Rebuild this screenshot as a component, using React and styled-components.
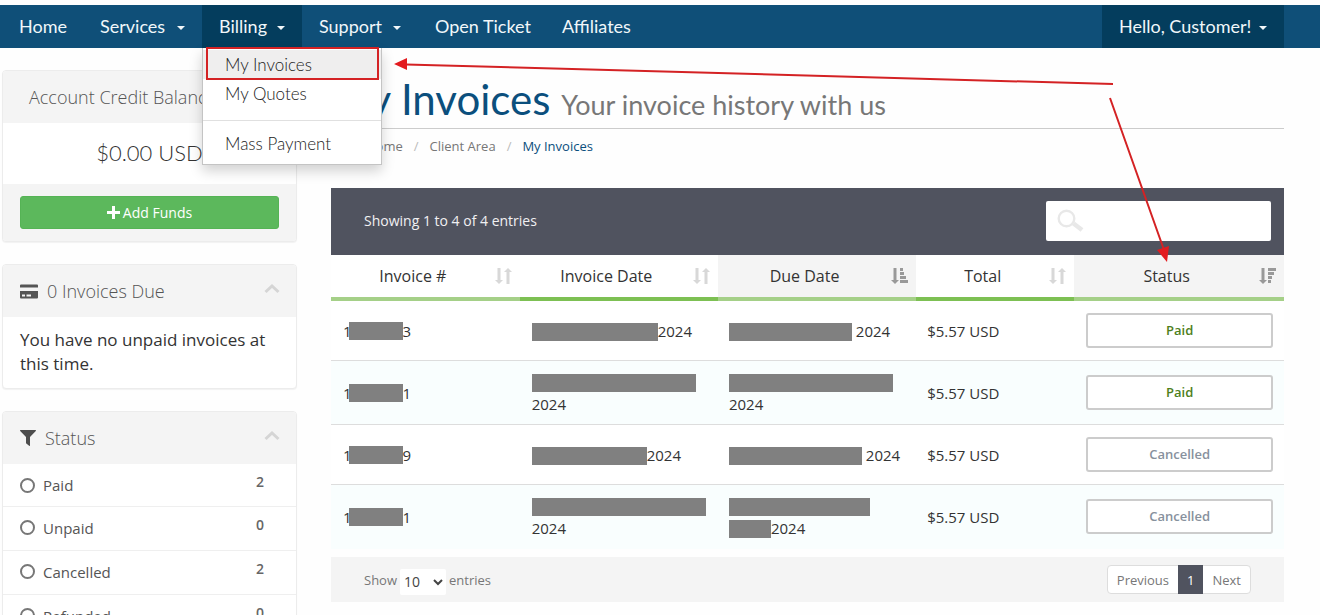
import React from "react";
import styled, { createGlobalStyle, css } from "styled-components";

const display = `Lato, "Open Sans", sans-serif`;

const GlobalStyle = createGlobalStyle`
  * { box-sizing: border-box; }
  body { margin: 0; background: #fefefe; color: #333; font: 400 15px/22px "Open Sans", sans-serif; }
  a { color: inherit; text-decoration: none; }
  button, input, select { font: inherit; color: inherit; }
  ul, ol, h1, h2, h3, p { margin: 0; padding: 0; list-style: none; }
`;

const Page = styled.div`
  position: relative;
  height: 100vh;
  overflow: hidden;
  padding-top: 5px;
`;

const NavBar = styled.nav`
  background: #0f4f78;
  padding: 0 36px 0 2px;
  display: flex;
  justify-content: space-between;
`;
const NavList = styled.ul`
  display: flex;
`;
const NavItem = styled.li`
  position: relative;
`;
const NavLink = styled.a`
  display: flex;
  align-items: center;
  justify-content: space-between;
  height: 43px;
  min-width: ${(p) => p.$width}px;
  padding: 0 ${(p) => (p.$caret ? 17 : 0)}px 2px 17px;
  font-family: ${display};
  font-size: 18px;
  color: #f1f7fa;
  white-space: nowrap;
  background: ${(p) => (p.$active ? "#043d5d" : "transparent")};
`;
const Caret = styled.span`
  border: 4px solid transparent;
  border-top-color: currentColor;
  border-bottom: 0;
  margin-top: 4px;
`;

const Menu = styled.ul`
  position: absolute;
  z-index: 5;
  top: 100%;
  left: 0;
  width: 180px;
  padding: 2px 0 6px;
  background: #fff;
  border: 1px solid #c4c4c4;
  border-top: 0;
  box-shadow: 0 6px 12px rgba(0, 0, 0, 0.18);
`;
const MenuLink = styled.a`
  display: block;
  padding: 0 22px;
  font: 300 17px/29px ${display};
  color: #222;
  background: ${(p) => (p.$active ? "#efeeee" : "transparent")};
`;
const Divider = styled.li`
  height: 1px;
  margin: 12px 0 8px;
  background: #e0e0e0;
`;

const Layout = styled.div`
  display: flex;
  align-items: flex-start;
  gap: 34px;
  padding: 22px 36px 0 2px;
`;
const Sidebar = styled.aside`
  flex: 0 0 295px;
  display: flex;
  flex-direction: column;
  gap: 22px;
`;
const Panel = styled.section`
  background: #fff;
  border: 1px solid #ececec;
  border-radius: 4px;
  box-shadow: 0 1px 1px rgba(0, 0, 0, 0.05);
  overflow: hidden;
`;
const PanelHead = styled.h3`
  display: flex;
  align-items: center;
  gap: 9px;
  height: 52px;
  padding: 0 16px 0 ${(p) => (p.$plain ? 26 : 17)}px;
  background: #f4f4f4;
  font-size: 18px;
  font-weight: 300;
  color: #555;
`;
const PanelTitle = styled.span`
  flex: 1;
`;
const Balance = styled.p`
  padding: 15px 0 16px;
  text-align: center;
  font: 300 22px/30px ${display};
  color: #333;
`;
const PanelFoot = styled.div`
  padding: 12px 17px;
  background: #f4f4f4;
`;
const GreenButton = styled.button`
  width: 100%;
  height: 33px;
  display: flex;
  align-items: center;
  justify-content: center;
  gap: 3px;
  border: 1px solid #55b355;
  border-radius: 3px;
  background: #5cb85c;
  color: #fff;
  font-size: 14px;
`;
const PanelText = styled.p`
  padding: 11px 17px 12px;
  font-size: 17px;
  line-height: 24px;
`;
const FilterRow = styled.label`
  display: flex;
  align-items: center;
  gap: 8px;
  height: ${(p) => (p.$first ? 42 : 44)}px;
  padding: 0 32px ${(p) => (p.$first ? 0 : 2)}px 17px;
  border-top: ${(p) => (p.$first ? 0 : 1)}px solid #efefef;
  color: #555;
`;
const Radio = styled.input`
  appearance: none;
  width: 15px;
  height: 15px;
  margin: 0;
  border: 2px solid #777;
  border-radius: 50%;
`;
const FilterName = styled.span`
  flex: 1;
`;
const Count = styled.span`
  align-self: flex-start;
  padding-top: 7px;
  font-size: 14px;
  font-weight: 600;
  color: #666;
`;

const Main = styled.main`
  flex: 1;
  min-width: 0;
`;
const Title = styled.h1`
  padding-top: 6px;
  height: 59px;
  border-bottom: 1px solid #ccc;
  font: 400 42px/46px ${display};
  color: #0b4f7d;
  white-space: nowrap;
`;
const Subtitle = styled.small`
  margin-left: 11px;
  font-size: 27px;
  color: #777;
`;
const Breadcrumb = styled.ol`
  display: flex;
  gap: 11px;
  padding: 7px 0 32px 35px;
  font-size: 13px;
  line-height: 20px;
  color: #777;
`;
const Slash = styled.li`
  color: #bbb;
`;
const Crumb = styled.li`
  color: ${(p) => (p.$current ? "#0b4f7d" : "inherit")};
`;

const Toolbar = styled.div`
  display: flex;
  align-items: center;
  justify-content: space-between;
  height: 67px;
  padding: 0 13px 2px 33px;
  background: #50535f;
  color: #f0f0f2;
  font-size: 14px;
`;
const SearchBox = styled.label`
  display: flex;
  align-items: center;
  gap: 8px;
  width: 225px;
  height: 40px;
  padding: 0 11px;
  border-radius: 2px;
  background: #fff;
`;
const SearchInput = styled.input`
  flex: 1;
  min-width: 0;
  border: 0;
  outline: 0;
  color: #333;
  background: transparent;
`;

const Table = styled.table`
  width: 100%;
  table-layout: fixed;
  border-collapse: separate;
  border-spacing: 0;
  margin-bottom: 8px;
`;
const Th = styled.th`
  width: ${(p) => p.$share}%;
  padding: 0;
  font-weight: 400;
  background: ${(p) => (p.$sorted ? "#f4f4f4" : "#fff")};
  border-bottom: 4px solid ${(p) => (p.$pale ? "#a5d088" : "#7dc053")};
`;
const SortButton = styled.button`
  display: flex;
  align-items: center;
  width: 100%;
  height: 42px;
  padding: 0 8px 0 0;
  border: 0;
  background: none;
  font-size: 16px;
  color: #333;
`;
const SortName = styled.span`
  flex: 1;
`;
const Tr = styled.tr`
  height: ${(p) => (p.$even ? 64 : 60)}px;
  background: ${(p) => (p.$even ? "#f9fefe" : "#fff")};
`;
const Td = styled.td`
  padding: 0 11px 0 ${(p) => (p.$tight ? 11 : 12)}px;
  border-bottom: 1px solid #ddd;
  white-space: nowrap;
  ${Tr}:last-child & {
    border-bottom-color: transparent;
  }
`;
const Redacted = styled.span`
  display: inline-block;
  vertical-align: middle;
  width: ${(p) => p.$width}px;
  height: 18px;
  background: #808080;
  ${(p) => p.$overlap && css`margin: -4px 0 0 -3px; vertical-align: -3px;`}
`;
const StatusBadge = styled.span`
  display: block;
  height: 35px;
  border: 2px solid #ccc;
  border-radius: 3px;
  background: #fff;
  text-align: center;
  font-size: 13px;
  font-weight: 600;
  line-height: 30px;
  color: ${(p) => (p.$paid ? "#4d801c" : "#87919d")};
`;

const TableFoot = styled.div`
  display: flex;
  align-items: center;
  justify-content: space-between;
  height: 45px;
  padding: 0 33px;
  background: #f4f4f4;
  font-size: 13px;
  color: #777;
`;
const LengthLabel = styled.label`
  display: flex;
  align-items: center;
  gap: 3px;
`;
const Select = styled.select`
  width: 46px;
  height: 26px;
  margin-top: 4px;
  border: 0;
  border-radius: 2px;
  background: #fff;
  font-size: 14px;
  color: #444;
`;
const Pager = styled.div`
  display: flex;
  height: 29px;
  border: 1px solid #ddd;
  border-radius: 4px;
  background: #fff;
`;
const PageButton = styled.button`
  margin: ${(p) => (p.$current ? "-1px 0" : 0)};
  padding: 0 9px;
  border: 0;
  background: ${(p) => (p.$current ? "#50535f" : "transparent")};
  color: ${(p) => (p.$current ? "#fff" : "inherit")};
`;

const Annotations = styled.svg`
  position: absolute;
  z-index: 10;
  top: 0;
  left: 0;
  pointer-events: none;
`;

const ChevronUp = () => (
  <svg width="16" height="16" viewBox="0 0 16 16" fill="none" stroke="#d5d5d5" strokeWidth="3">
    <path d="M1.500 9 8 3l6.500 6" />
  </svg>
);
const CardIcon = () => (
  <svg width="18" height="15" viewBox="0 0 18 15" fill="#555">
    <path d="M1 .5h16a1 1 0 0 1 1 1V3.500H0V1.500a1 1 0 0 1 1-1zM0 7h18v6.500a1 1 0 0 1-1 1H1a1 1 0 0 1-1-1zM2 10.500v2h3v-2zm4.500 0v2H11v-2z" fillRule="evenodd" />
  </svg>
);
const FilterIcon = () => (
  <svg width="16" height="16" viewBox="0 0 16 16" fill="#4d4d4d">
    <path d="M.6 0h14.800c.6 0 .8.6.4 1L10 7v8.400c0 .5-.5.700-.9.400L6.300 13.400A1 1 0 0 1 6 12.700V7L.2 1C-.2.600 0 0 .6 0z" />
  </svg>
);
const PlusIcon = () => (
  <svg width="13" height="13" viewBox="0 0 13 13" fill="#fff">
    <path d="M5 0h3v5h5v3H8v5H5V8H0V5h5z" />
  </svg>
);
const SearchIcon = () => (
  <svg width="28" height="24" viewBox="0 0 28 24" fill="none" stroke="#e8e8e8">
    <circle cx="9.500" cy="9.500" r="7.800" strokeWidth="2.400" />
    <path d="M16.500 14.500 25 21" strokeWidth="4.500" />
  </svg>
);
const SortIcon = ({ kind }) => (
  <svg width="17" height="18" viewBox="0 0 17 18" fill={kind === "none" ? "#d8d8d8" : "#999"}>
    <path d="M2.500 1h3v12H8l-4 4-4-4h2.500z" />
    {kind === "none" && <path d="M11.500 17h3V5H17l-4-4-4 4h2.500z" />}
    {kind === "asc" && <path d="M9 1h3v3H9zM9 5h4v3H9zM9 9h6v3H9zM9 13h8v3H9z" />}
    {kind === "desc" && <path d="M9 1h8v3H9zM9 5h6v3H9zM9 9h4v3H9zM9 13h3v3H9z" />}
  </svg>
);

const columns = [
  { name: "Invoice #", share: 19.8, kind: "none", pale: true },
  { name: "Invoice Date", share: 20.8, kind: "none" },
  { name: "Due Date", share: 20.8, kind: "asc", pale: true },
  { name: "Total", share: 16.6, kind: "none" },
  { name: "Status", share: 22, kind: "desc", pale: true },
];

const invoices = [
  { last: "3", issued: <><Redacted $width={126} />2024</>, due: <><Redacted $width={123} /> 2024</>, status: "Paid" },
  { last: "1", issued: <><Redacted $width={164} /><br />2024</>, due: <><Redacted $width={164} /><br />2024</>, status: "Paid" },
  { last: "9", issued: <><Redacted $width={115} />2024</>, due: <><Redacted $width={133} /> 2024</>, status: "Cancelled" },
  { last: "1", issued: <><Redacted $width={174} /><br />2024</>, due: <><Redacted $width={141} /><br /><Redacted $width={42} />2024</>, status: "Cancelled" },
];

const filters = [["Paid", 2], ["Unpaid", 0], ["Cancelled", 2], ["Refunded", 0]];

const NavEntry = ({ label, width, caret, active, children }) => (
  <NavItem>
    <NavLink href="#" $width={width} $caret={caret} $active={active}>
      {label}
      {caret && <Caret />}
    </NavLink>
    {children}
  </NavItem>
);

export default function App() {
  return (
    <Page>
      <GlobalStyle />
      <NavBar>
        <NavList>
          <NavEntry label="Home" width={81} />
          <NavEntry label="Services" width={119} caret />
          <NavEntry label="Billing" width={100} caret active>
            <Menu>
              <li><MenuLink href="#" $active>My Invoices</MenuLink></li>
              <li><MenuLink href="#">My Quotes</MenuLink></li>
              <Divider />
              <li><MenuLink href="#">Mass Payment</MenuLink></li>
            </Menu>
          </NavEntry>
          <NavEntry label="Support" width={116} caret />
          <NavEntry label="Open Ticket" width={127} />
          <NavEntry label="Affiliates" width={99} />
        </NavList>
        <NavList>
          <NavEntry label="Hello, Customer!" width={182} caret active />
        </NavList>
      </NavBar>

      <Layout>
        <Sidebar>
          <Panel>
            <PanelHead $plain>Account Credit Balance</PanelHead>
            <Balance>$0.00 USD</Balance>
            <PanelFoot>
              <GreenButton type="button"><PlusIcon />Add Funds</GreenButton>
            </PanelFoot>
          </Panel>
          <Panel>
            <PanelHead><CardIcon /><PanelTitle>0 Invoices Due</PanelTitle><ChevronUp /></PanelHead>
            <PanelText>You have no unpaid invoices at this time.</PanelText>
          </Panel>
          <Panel>
            <PanelHead><FilterIcon /><PanelTitle>Status</PanelTitle><ChevronUp /></PanelHead>
            {filters.map(([name, count], i) => (
              <FilterRow key={name} $first={i === 0}>
                <Radio type="radio" name="status" />
                <FilterName>{name}</FilterName>
                <Count>{count}</Count>
              </FilterRow>
            ))}
          </Panel>
        </Sidebar>

        <Main>
          <Title>My Invoices<Subtitle>Your invoice history with us</Subtitle></Title>
          <Breadcrumb>
            <Crumb><a href="#">Home</a></Crumb>
            <Slash>/</Slash>
            <Crumb><a href="#">Client Area</a></Crumb>
            <Slash>/</Slash>
            <Crumb $current>My Invoices</Crumb>
          </Breadcrumb>

          <Toolbar>
            <span>Showing 1 to 4 of 4 entries</span>
            <SearchBox>
              <SearchIcon />
              <SearchInput type="search" aria-label="Search invoices" />
            </SearchBox>
          </Toolbar>
          <Table>
            <thead>
              <tr>
                {columns.map((c) => (
                  <Th key={c.name} $share={c.share} $pale={c.pale} $sorted={c.kind !== "none"}>
                    <SortButton type="button">
                      <SortName>{c.name}</SortName>
                      <SortIcon kind={c.kind} />
                    </SortButton>
                  </Th>
                ))}
              </tr>
            </thead>
            <tbody>
              {invoices.map((row, i) => (
                <Tr key={i} $even={i % 2 === 1}>
                  <Td>1<Redacted $width={54} $overlap />{row.last}</Td>
                  <Td>{row.issued}</Td>
                  <Td $tight>{row.due}</Td>
                  <Td $tight>$5.57 USD</Td>
                  <Td><StatusBadge $paid={row.status === "Paid"}>{row.status}</StatusBadge></Td>
                </Tr>
              ))}
            </tbody>
          </Table>
          <TableFoot>
            <LengthLabel>
              Show
              <Select defaultValue="10"><option>10</option><option>25</option><option>50</option></Select>
              entries
            </LengthLabel>
            <Pager>
              <PageButton type="button">Previous</PageButton>
              <PageButton type="button" $current>1</PageButton>
              <PageButton type="button">Next</PageButton>
            </Pager>
          </TableFoot>
        </Main>
      </Layout>

      <Annotations width="1320" height="300" viewBox="0 0 1320 300" fill="none" stroke="#d42224" strokeWidth="2">
        <rect x="207" y="48" width="171" height="31" />
        <path d="M1113 84 406 64.500M1110 98l54 152" />
        <path d="M394 64l13-6v12zM1167 262l-10-12 12-4z" fill="#e31b1f" stroke="none" />
      </Annotations>
    </Page>
  );
}
